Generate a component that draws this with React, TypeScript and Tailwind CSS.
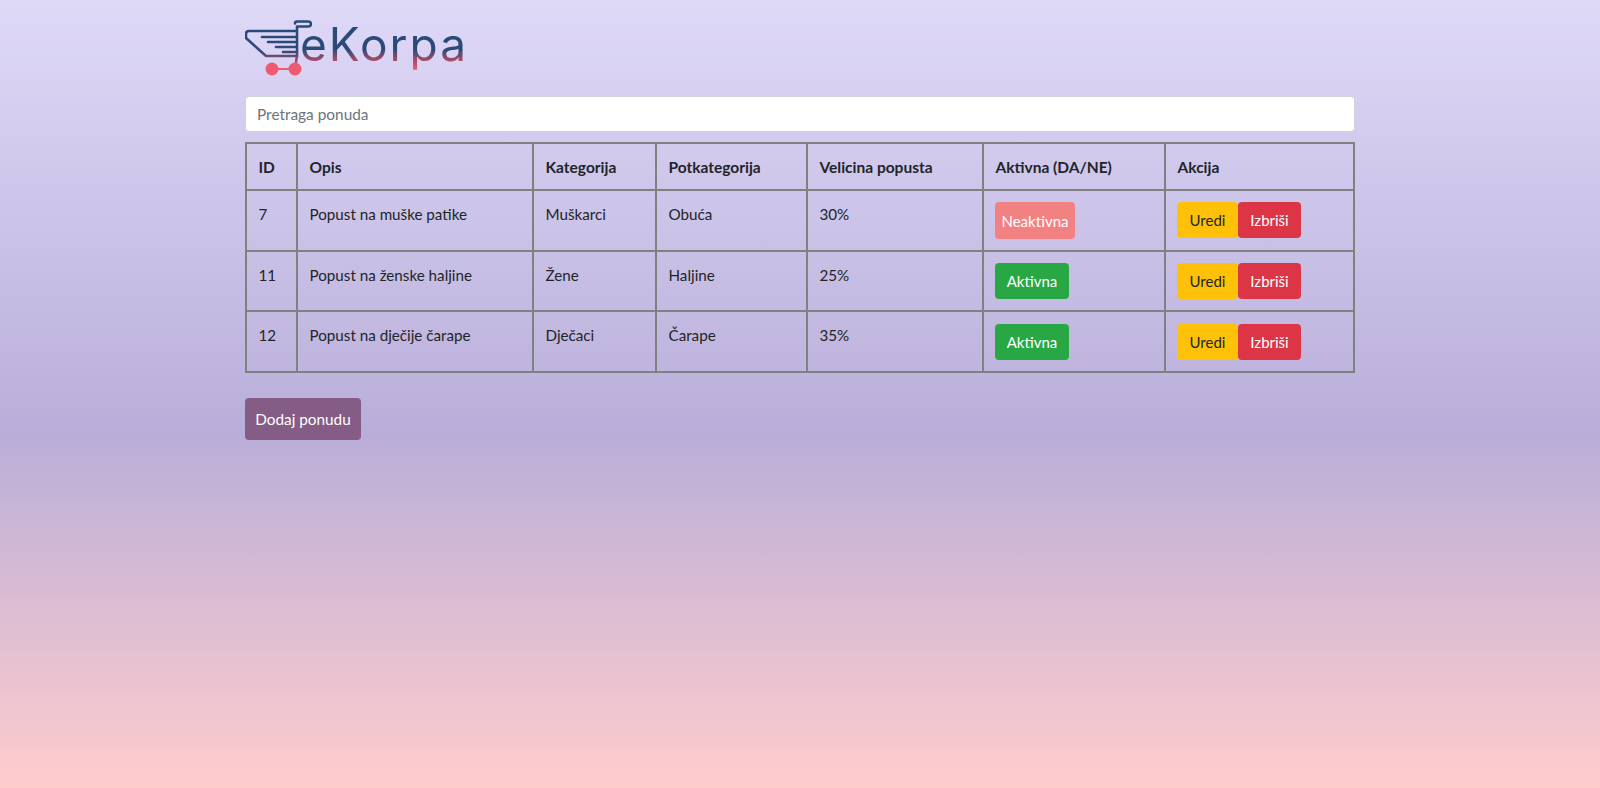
import React from 'react';

const rows = [
  { id: 7, opis: 'Popust na muške patike', kat: 'Muškarci', pot: 'Obuća', vel: '30%', aktivna: false },
  { id: 11, opis: 'Popust na ženske haljine', kat: 'Žene', pot: 'Haljine', vel: '25%', aktivna: true },
  { id: 12, opis: 'Popust na dječije čarape', kat: 'Dječaci', pot: 'Čarape', vel: '35%', aktivna: true },
];

const headers = ['ID', 'Opis', 'Kategorija', 'Potkategorija', 'Velicina popusta', 'Aktivna (DA/NE)', 'Akcija'];

const Logo = () => (
  <div className="flex items-start h-[58px] w-[222px]">
    <svg width="67" height="58" viewBox="0 0 67 58" fill="none" className="shrink-0">
      <defs>
        <linearGradient id="cart" x1="0" y1="24" x2="0" y2="52" gradientUnits="userSpaceOnUse">
          <stop offset="0" stopColor="#2a4a78" />
          <stop offset="0.3" stopColor="#3c4a78" />
          <stop offset="0.6" stopColor="#a84c68" />
          <stop offset="1" stopColor="#f4566b" />
        </linearGradient>
      </defs>
      <g stroke="url(#cart)" strokeWidth="2.6" strokeLinecap="round" strokeLinejoin="round">
        <path d="M50 3.500 Q50 1.500 52 1.500 H63 Q66 1.500 66 4 Q66 6.500 63 6.500 H52 V36 L51 42" />
        <path d="M50 11 H4 Q1 11 1 14 V18 L21 36 H52" />
        <path d="M17 17 H50" />
        <path d="M23 22 H50" />
        <path d="M31 27 H50" />
        <path d="M38 32 H50" />
      </g>
      <circle cx="27" cy="49" r="6.500" fill="#ee5a70" />
      <circle cx="50" cy="49" r="6.500" fill="#ee5a70" />
      <path d="M30 49 H48" stroke="#ee5a70" strokeWidth="2" />
    </svg>
    <span className="ml-[-12px] mt-[-4px] font-['Inter',sans-serif] font-normal text-[46px] leading-[56px] tracking-[2px] text-transparent bg-clip-text bg-[linear-gradient(to_bottom,#2a4a78_0%,#2c4a78_60%,#a84c68_79%,#f4566b_96%)]">
      eKorpa
    </span>
  </div>
);

const cell = 'border-2 border-[#808080] pl-[11.5px] pr-[11px] pt-[11px] pb-[11px] align-top leading-[24px]';
const btnCell = 'border-2 border-[#808080] px-[11px] pb-[11px] align-top leading-[24px]';
const btn = 'inline-block h-9 rounded text-[15px] leading-9';

export default function App() {
  return (
    <div className="min-h-[788px] bg-[linear-gradient(to_bottom,#dfd9f8_0%,#b9aed9_55%,#ffcccc_100%)] font-['Lato',sans-serif] text-[#212529]">
      <div className="mx-auto w-[1140px] px-[15px] pt-[20px]">
        <Logo />
        <input
          placeholder="Pretraga ponuda"
          className="mt-[18px] block w-full h-[36px] bg-white border border-[#ced4da] rounded px-[11px] text-[15.4px] placeholder:text-[#6c757d] outline-none"
        />
        <table className="mt-[10px] w-full table-fixed border-collapse border-2 border-[#808080] text-[15.2px]">
          <colgroup>
            <col className="w-[51px]" />
            <col className="w-[236px]" />
            <col className="w-[123px]" />
            <col className="w-[151px]" />
            <col className="w-[176px]" />
            <col className="w-[182px]" />
            <col />
          </colgroup>
          <thead>
            <tr className="h-[47px]">
              {headers.map((h) => (
                <th key={h} className="border-2 border-[#808080] pl-[11.5px] pr-[11px] py-0 text-left text-[15.5px] font-bold leading-[24px]">{h}</th>
              ))}
            </tr>
          </thead>
          <tbody>
            {rows.map((r) => (
              <tr key={r.id}>
                <td className={cell}>{r.id}</td>
                <td className={cell}>{r.opis}</td>
                <td className={cell}>{r.kat}</td>
                <td className={cell}>{r.pot}</td>
                <td className={cell}>{r.vel}</td>
                <td className={`${btnCell} ${r.id === 12 ? 'pt-[12px]' : 'pt-[11px]'}`}>
                  {r.aktivna ? (
                    <button className={`${btn} w-[74px] bg-[#28a745] text-white`}>Aktivna</button>
                  ) : (
                    <button className={`${btn} w-[80px] h-[37px] bg-[#f28282] text-white`}>Neaktivna</button>
                  )}
                </td>
                <td className={`${btnCell} ${r.id === 12 ? 'pt-[12px]' : 'pt-[11px]'}`}>
                  <div className="flex">
                    <button className={`${btn} w-[61px] bg-[#ffc107] text-[#212529]`}>Uredi</button>
                    <button className={`${btn} w-[63px] bg-[#dc3545] text-white`}>Izbriši</button>
                  </div>
                </td>
              </tr>
            ))}
          </tbody>
        </table>
        <button className="mt-[25px] block h-[42px] w-[116px] rounded bg-[#845c85] text-white text-[15.3px]">Dodaj ponudu</button>
      </div>
    </div>
  );
}
